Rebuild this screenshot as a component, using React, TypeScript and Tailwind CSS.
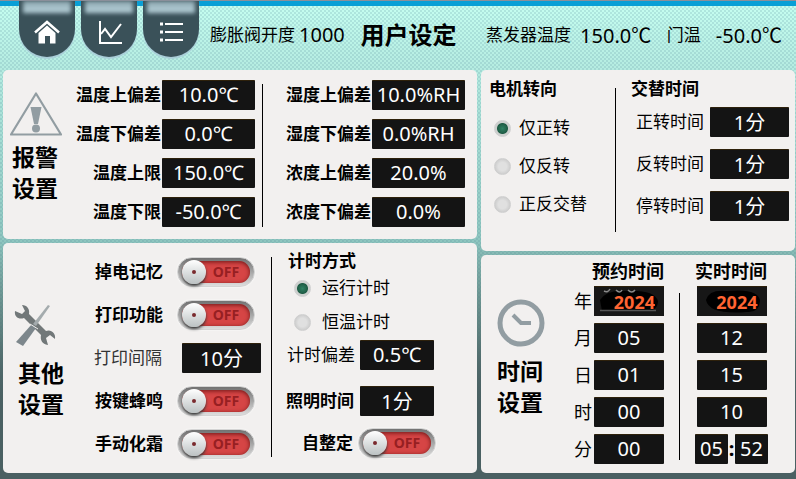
import { useState, type ReactNode } from "react";
import clsx from "clsx";

interface FieldProps {
  label: string;
  value: string;
  bold?: boolean;
  width?: string; // width class of the black value box
  gap?: string;
}

const valueBox =
  "h-[30px] rounded-[1px] border-t border-[#2e210b] bg-[#141414] pb-[2px] text-center text-[20px] leading-[27px] text-white outline-none";

function Field({ label, value, bold, width = "w-[93px]", gap = "gap-px" }: FieldProps) {
  return (
    <label className={clsx("flex items-center justify-end", gap)}>
      <span className={clsx("whitespace-nowrap", bold && "font-bold")}>{label}</span>
      <input className={clsx(valueBox, width)} defaultValue={value} />
    </label>
  );
}

function Toggle({ label, gap = "gap-[14px]" }: { label: string; gap?: string }) {
  const [on, setOn] = useState(false);
  return (
    <div className={clsx("flex items-center justify-end", gap)}>
      <span className="font-bold">{label}</span>
      <button
        type="button"
        role="switch"
        aria-checked={on}
        aria-label={label}
        onClick={() => setOn(!on)}
        className="flex h-[30px] w-[78px] items-center rounded-full border border-[#d4d4d4] bg-linear-to-b from-[#727272] to-[#dedede] px-1 shadow-[0_0_2px_#ffffff]"
      >
        <span
          className={clsx(
            "flex h-[22px] w-full items-center rounded-full shadow-[inset_0_1px_4px_#6b1515]",
            on ? "flex-row-reverse bg-[#3c9a5f]" : "bg-[#d64545]"
          )}
        >
          <span className="flex size-6 shrink-0 items-center justify-center rounded-full bg-linear-to-b from-white to-[#bcc2c3] shadow-[0_2px_3px_#333]">
            <span className="size-1 rounded-full bg-[#7a2a2e]" />
          </span>
          <span className="flex-1 pr-1 text-center text-[14px] leading-none font-bold text-[#971f22]">
            {on ? "ON" : "OFF"}
          </span>
        </span>
      </button>
    </div>
  );
}

function Radio({ name, label, checked, gap = "gap-2" }: { name: string; label: string; checked?: boolean; gap?: string }) {
  return (
    <label className={clsx("flex items-center", gap)}>
      <input
        type="radio"
        name={name}
        defaultChecked={checked}
        className="size-[17px] appearance-none rounded-full border border-[#cfcfcf] bg-[radial-gradient(circle,#e0e0e0_40%,#cccccc_75%)] checked:bg-[radial-gradient(circle,#2f8263_0,#1f5c45_5px,#cdd0ce_6px)]"
      />
      <span>{label}</span>
    </label>
  );
}

function Panel({ className, children }: { className?: string; children: ReactNode }) {
  return <section className={clsx("flex rounded-[5px] bg-[#f2f0ef]", className)}>{children}</section>;
}

function SideTitle({ lines, className }: { lines: string[]; className?: string }) {
  return (
    <h2 className={clsx("text-[23px] leading-[31px] font-bold", className)}>
      {lines.map((line) => (
        <span key={line} className="block">
          {line}
        </span>
      ))}
    </h2>
  );
}

function Celsius({ value }: { value: string }) {
  return (
    <span className="text-[20px]">
      {value}
      <span className="font-['Noto_Sans_CJK_SC',sans-serif]">℃</span>
    </span>
  );
}

function NavTab({ label, children }: { label: string; children: ReactNode }) {
  return (
    <button
      type="button"
      aria-label={label}
      className="flex h-14 w-14 flex-col items-center overflow-hidden rounded-b-full bg-[#3a5159] shadow-[0_2px_1px_#a9cdd8]"
    >
      <span className="h-3 w-12 shrink-0 bg-linear-to-b from-[#8fa9b2] to-[#b8d2db] blur-[2px]" />
      <svg viewBox="0 0 28 28" className="mt-[5px] size-7 shrink-0" fill="none" stroke="white" strokeWidth="2">
        {children}
      </svg>
    </button>
  );
}

function WarningIcon() {
  return (
    <svg viewBox="0 0 52 44" className="h-11 w-[52px]">
      <path d="M26 1.500 51 42.500H1Z" fill="none" stroke="#929da2" strokeWidth="2.200" strokeLinejoin="round" />
      <path d="M20.500 15h11L28 32h-4Z" fill="#929da2" />
      <circle cx="26" cy="36.500" r="4" fill="#929da2" />
    </svg>
  );
}

function ToolsIcon() {
  return (
    <svg viewBox="0 0 42 42" className="size-[42px]">
      <path
        d="M1 7 8 10 11 7 8 1C13 1 16 5 15 10L32 27C37 25 42 29 41 35L36 31 32 34 34 41C28 40 26 36 27 31L10 14C5 16 0 13 1 7Z"
        fill="#727879"
      />
      <path d="M34 1 19 20 22 22 36 2Z" fill="#a4abad" />
      <path d="M18 20 22 24 9 42 2 38Z" fill="#7d878c" />
      <path d="M16 20 24 25" stroke="#f2f0ef" strokeWidth="1" />
    </svg>
  );
}

function ClockIcon() {
  return (
    <svg viewBox="0 0 48 48" className="size-12" fill="none" stroke="#929da2">
      <circle cx="24" cy="24" r="21" strokeWidth="5" />
      <path d="M16 16 24 24H34" strokeWidth="4" />
    </svg>
  );
}

// Year boxes have a dark smear behind the orange digits
function YearInput({ label, children }: { label: string; children: ReactNode }) {
  return (
    <div className="relative h-[30px] w-[70px] bg-[#171717]">
      <svg viewBox="0 0 70 30" className="absolute inset-0" fill="none">
        {children}
      </svg>
      <input
        aria-label={label}
        defaultValue="2024"
        className="relative h-[30px] w-full border-t border-[#2e210b] bg-transparent pr-[9px] text-right text-[18px] font-bold text-[#ff6432] outline-none"
      />
    </div>
  );
}

const booked = [
  { unit: "月", value: "05" },
  { unit: "日", value: "01" },
  { unit: "时", value: "00" },
  { unit: "分", value: "00" },
];

const realtime = ["12", "15", "10"];

export default function App() {
  return (
    <div className="min-h-screen bg-[linear-gradient(to_bottom,transparent_50%,#4a6062_85%),repeating-conic-gradient(#5a8c9c33_0_25%,transparent_0_50%),linear-gradient(to_bottom,#c6fff1_0%,#b4ebe0_15%,#8fc7c0_50%,#77a69e_70%,#4a6062_85%)] bg-[size:100%_100%,4px_4px,100%_100%] font-['Noto_Sans','Noto_Sans_CJK_SC',sans-serif] text-[17px] leading-[24px] text-black">
      <header className="flex h-[70px] flex-col">
        <div className="h-[6px] shrink-0 border-t border-[#8a8f9a] bg-[#089fd6]" />
        <div className="-mt-[5px] flex items-start pr-[14px] pl-[19px]">
          <nav className="flex gap-[6px]">
            <NavTab label="主页">
              <path d="M2 14.500 14 4 26 14.500" strokeWidth="2.500" />
              <path d="M5.500 15 14 7.500 22.500 15V25.500H17V18H12V25.500H5.500Z" fill="white" stroke="none" />
            </NavTab>
            <NavTab label="曲线">
              <path d="M5 3V25H27" />
              <path d="M6 16 10 11 16 19 26 6" />
            </NavTab>
            <NavTab label="列表">
              <path d="M8 6H26M8 14H26M8 22H26" />
              <path d="M3 6H6M3 14H6M3 22H6" strokeWidth="3" />
            </NavTab>
          </nav>
          <div className="flex h-[68px] flex-1 items-center justify-between pl-[11px] whitespace-nowrap">
            <div className="flex items-center gap-1">
              <span>膨胀阀开度</span>
              <span className="text-[20px]">1000</span>
            </div>
            <h1 className="text-[24px] font-bold">用户设定</h1>
            <div className="flex items-center gap-[9px] pl-[14px]">
              <span>蒸发器温度</span>
              <Celsius value="150.0" />
            </div>
            <div className="flex items-center gap-[15px]">
              <span>门温</span>
              <Celsius value="-50.0" />
            </div>
          </div>
        </div>
      </header>

      <main className="grid grid-cols-[1fr_314px] gap-1 pr-px pb-[6px] pl-[3px]">
        <div className="flex flex-col gap-1">
          <Panel className="pt-[10px] pr-3 pb-3">
            <div className="flex w-16 shrink-0 flex-col pt-3 pl-[7px]">
              <WarningIcon />
              <SideTitle lines={["报警", "设置"]} className="pt-[6px] pl-[2px]" />
            </div>
            <div className="flex w-[188px] shrink-0 flex-col gap-[9px]">
              <Field label="温度上偏差" value="10.0℃" bold />
              <Field label="温度下偏差" value="0.0℃" bold />
              <Field label="温度上限" value="150.0℃" bold />
              <Field label="温度下限" value="-50.0℃" bold />
            </div>
            <div className="mt-1 ml-[7px] w-px bg-black" />
            <div className="flex flex-1 flex-col gap-[9px]">
              <Field label="湿度上偏差" value="10.0%RH" bold />
              <Field label="湿度下偏差" value="0.0%RH" bold />
              <Field label="浓度上偏差" value="20.0%" bold />
              <Field label="浓度下偏差" value="0.0%" bold />
            </div>
          </Panel>

          <Panel className="flex-1 pt-[7px]">
            <div className="flex w-[72px] shrink-0 flex-col pt-[54px] pl-[11px]">
              <ToolsIcon />
              <SideTitle lines={["其他", "设置"]} className="pt-[12px] pl-1" />
            </div>
            <div className="grid w-[180px] shrink-0 auto-rows-[43px] content-start items-center">
              <Toggle label="掉电记忆" />
              <Toggle label="打印功能" />
              <div className="-mr-[6px] text-[#333]">
                <Field label="打印间隔" value="10分" width="w-[79px]" gap="gap-5" />
              </div>
              <Toggle label="按键蜂鸣" />
              <Toggle label="手动化霜" />
            </div>
            <div className="mt-[7px] mb-4 ml-4 w-px bg-black" />
            <div className="flex flex-1 flex-col pl-[14px] pr-[41px]">
              <h3 className="pl-[2px] leading-[22px] font-bold">计时方式</h3>
              <div className="flex flex-col gap-[10px] pt-1 pl-2">
                <Radio name="timing" label="运行计时" gap="gap-[11px]" checked />
                <Radio name="timing" label="恒温计时" gap="gap-[11px]" />
              </div>
              <div className="flex flex-col gap-4 pt-[6px] pr-[2px]">
                <Field label="计时偏差" value="0.5℃" width="w-[74px]" gap="gap-[5px]" />
                <Field label="照明时间" value="1分" width="w-[74px]" gap="gap-[6px]" bold />
              </div>
              <div className="pt-3">
                <Toggle label="自整定" gap="gap-[5px]" />
              </div>
            </div>
          </Panel>
        </div>

        <div className="flex flex-col gap-1">
          <Panel className="pt-[7px] pr-[6px] pb-[19px] pl-2">
            <div className="w-[126px]">
              <h3 className="font-bold">电机转向</h3>
              <div className="flex flex-col gap-[14px] pt-[15px] pl-[5px]">
                <Radio name="direction" label="仅正转" checked />
                <Radio name="direction" label="仅反转" />
                <Radio name="direction" label="正反交替" />
              </div>
            </div>
            <div className="mt-[11px] w-px bg-black" />
            <div className="flex-1 pb-[11px] pl-[15px]">
              <h3 className="font-bold">交替时间</h3>
              <div className="flex flex-col gap-3 pt-[6px]">
                <Field label="正转时间" value="1分" width="w-[79px]" gap="gap-[6px]" />
                <Field label="反转时间" value="1分" width="w-[79px]" gap="gap-[6px]" />
                <Field label="停转时间" value="1分" width="w-[79px]" gap="gap-[6px]" />
              </div>
            </div>
          </Panel>

          <Panel className="flex-1 pt-1 pr-[27px] pb-[9px] pl-4">
            <div className="flex flex-1 flex-col pt-10">
              <ClockIcon />
              <SideTitle lines={["时间", "设置"]} className="pt-[9px]" />
            </div>
            <div className="flex flex-col items-end">
              <h3 className="text-[18px] font-bold">预约时间</h3>
              <div className="flex flex-col gap-[7px] pt-[3px] text-[18px]">
                <div className="flex items-center gap-[2px]">
                  <span>年</span>
                  <YearInput label="预约年份">
                    <path d="M6 14Q12 4 30 5Q60 3 64 15Q64 25 52 25H8Z" fill="#000" />
                    <path d="M6 24.500H62" stroke="#555" strokeWidth="1.500" />
                    <path d="M10 5Q14 7 16 3M22 4Q26 8 28 4M34 4Q38 8 41 4" stroke="#8a8a8a" strokeWidth="1.500" />
                  </YearInput>
                </div>
                {booked.map((item) => (
                  <Field key={item.unit} label={item.unit} value={item.value} width="w-[70px]" gap="gap-[2px]" />
                ))}
              </div>
            </div>
            <div className="mt-[34px] mb-1 ml-[15px] w-px bg-black" />
            <div className="ml-[15px] flex flex-col">
              <h3 className="text-[18px] font-bold">实时时间</h3>
              <div className="flex flex-col items-center gap-[7px] pt-[3px]">
                <YearInput label="实时年份">
                  <path d="M9 14Q12 3 30 5Q62 2 63 15Q62 27 50 26Q12 29 9 14Z" fill="#000" />
                </YearInput>
                {realtime.map((value) => (
                  <input key={value} aria-label="实时时间" className={clsx(valueBox, "w-[70px]")} defaultValue={value} />
                ))}
                <div className="flex items-center">
                  <input aria-label="分" className={clsx(valueBox, "w-[33px]")} defaultValue="05" />
                  <span className="w-[7px] text-center text-[20px] font-bold">:</span>
                  <input aria-label="秒" className={clsx(valueBox, "w-[33px]")} defaultValue="52" />
                </div>
              </div>
            </div>
          </Panel>
        </div>
      </main>
    </div>
  );
}
